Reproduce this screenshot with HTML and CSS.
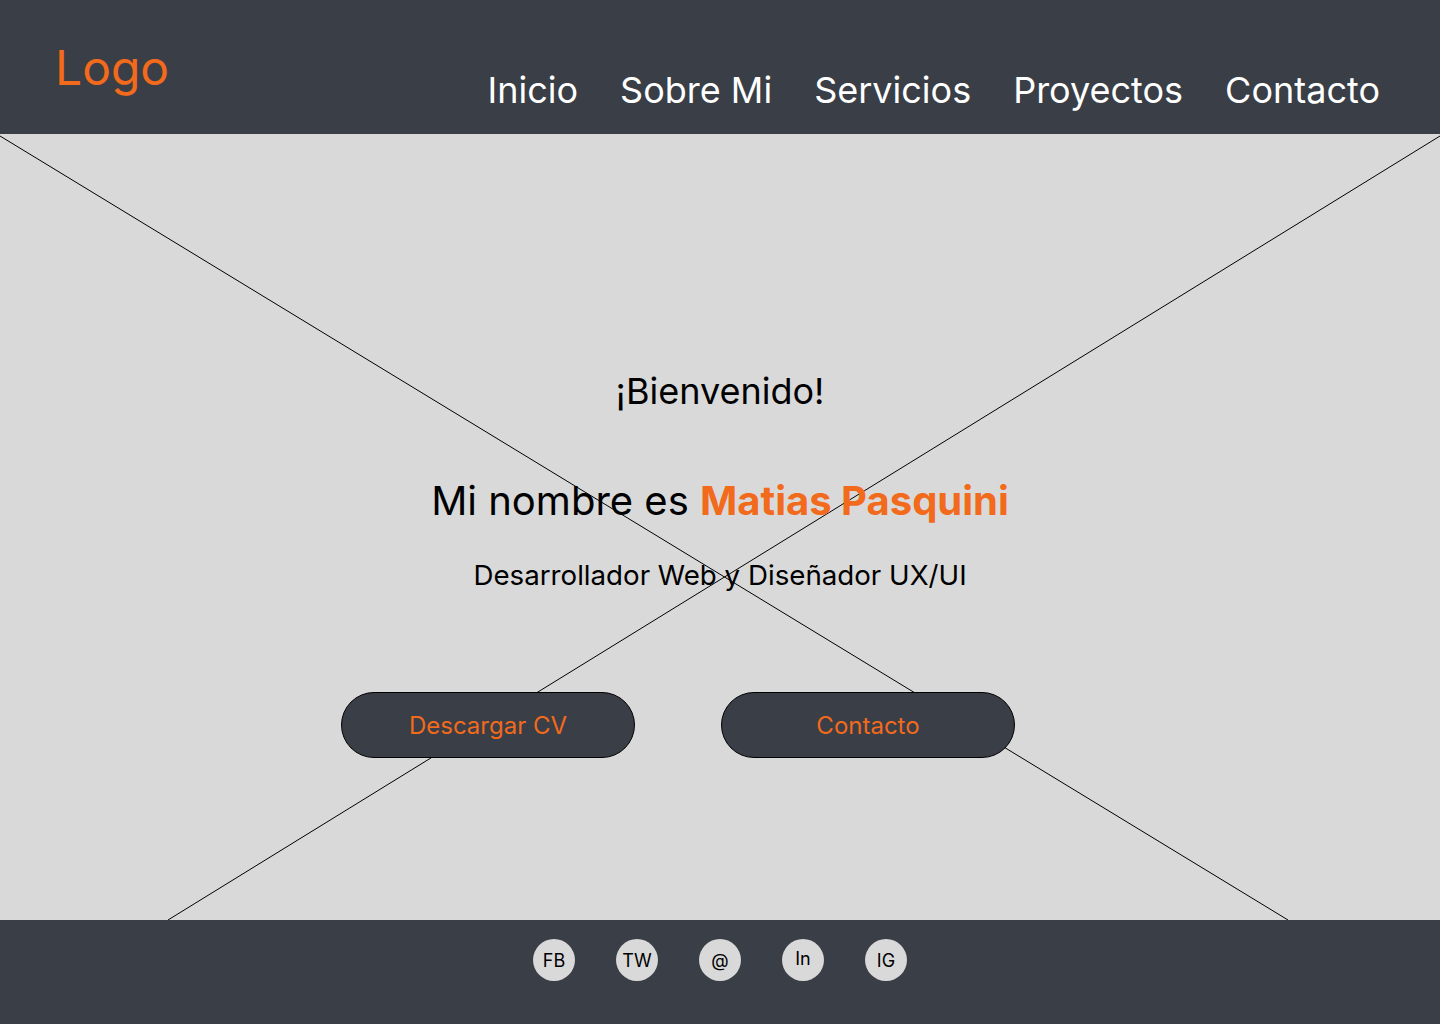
FILE: index.html
```html
<!DOCTYPE html>
<html lang="es">
<head>
<meta charset="utf-8">
<title>Matias Pasquini</title>
<link rel="stylesheet" href="styles.css">
</head>
<body>
<div class="page">
  <header class="header">
    <div class="logo">Logo</div>
    <nav class="nav">
      <a href="#" class="nav-link">Inicio</a>
      <a href="#" class="nav-link">Sobre Mi</a>
      <a href="#" class="nav-link">Servicios</a>
      <a href="#" class="nav-link">Proyectos</a>
      <a href="#" class="nav-link">Contacto</a>
    </nav>
  </header>
  <main class="hero">
    <svg class="placeholder" viewBox="0 0 1440 786" preserveAspectRatio="none" aria-hidden="true">
      <line x1="0" y1="2" x2="1288" y2="786" stroke="#000" stroke-width="1"/>
      <line x1="1440" y1="2" x2="168" y2="786" stroke="#000" stroke-width="1"/>
    </svg>
    <div class="hero-content">
      <h2 class="welcome">¡Bienvenido!</h2>
      <h1 class="name">Mi nombre es <span class="accent">Matias Pasquini</span></h1>
      <p class="role">Desarrollador Web y Diseñador UX/UI</p>
      <div class="actions">
        <a href="#" class="btn">Descargar CV</a>
        <a href="#" class="btn">Contacto</a>
      </div>
    </div>
  </main>
  <footer class="footer">
    <a href="#" class="social">FB</a>
    <a href="#" class="social">TW</a>
    <a href="#" class="social">@</a>
    <a href="#" class="social social-up">In</a>
    <a href="#" class="social">IG</a>
  </footer>
</div>
</body>
</html>
```
FILE: styles.css
```css
* { box-sizing: border-box; }
html, body { margin: 0; padding: 0; }
body {
  font-family: Inter, "Noto Sans", sans-serif;
  background: #d9d9d9;
}
.page {
  width: 1440px;
  height: 1024px;
  display: flex;
  flex-direction: column;
  overflow: hidden;
}
.header {
  height: 134px;
  flex: 0 0 134px;
  background: #3a3e46;
  display: flex;
  justify-content: space-between;
  align-items: flex-start;
  padding: 0 60px 0 55px;
}
.logo {
  color: #f26a1c;
  font-size: 48px;
  line-height: 48px;
  margin-top: 44px;
}
.nav {
  display: flex;
  gap: 42px;
  margin-top: 72px;
}
.nav-link {
  color: #ffffff;
  text-decoration: none;
  font-size: 36px;
  line-height: 36px;
}
.hero {
  flex: 1;
  position: relative;
  background: #d9d9d9;
}
.placeholder {
  position: absolute;
  left: 0;
  top: 0;
  width: 100%;
  height: 100%;
  z-index: 0;
}
.hero-content {
  position: relative;
  z-index: 1;
  display: flex;
  flex-direction: column;
  align-items: center;
  padding-top: 239px;
  color: #000;
}
.welcome {
  margin: 0;
  font-weight: 400;
  font-size: 36px;
  line-height: 36px;
}
.name {
  margin: 72px 0 0;
  font-weight: 400;
  font-size: 40px;
  line-height: 40px;
}
.accent {
  color: #f26a1c;
  font-weight: 700;
}
.role {
  margin: 40px 0 0;
  font-size: 27.7px;
  line-height: 28px;
}
.actions {
  margin-top: 103px;
  display: flex;
  gap: 86px;
  padding-right: 84px;
}
.btn {
  width: 294px;
  height: 66px;
  border-radius: 33px;
  border: 1px solid #000;
  background: #3a3e46;
  color: #f26a1c;
  font-size: 24px;
  text-decoration: none;
  display: flex;
  align-items: center;
  justify-content: center;
}
.footer {
  flex: 0 0 104px;
  height: 104px;
  background: #3a3e46;
  position: relative;
  z-index: 2;
  display: flex;
  justify-content: center;
  align-items: flex-start;
  gap: 41px;
  padding-top: 19px;
}
.social {
  width: 42px;
  height: 42px;
  border-radius: 50%;
  background: #d9d9d9;
  color: #000;
  font-size: 18px;
  text-decoration: none;
  display: flex;
  align-items: center;
  justify-content: center;
}
.social-up {
  padding-bottom: 4px;
}
```
